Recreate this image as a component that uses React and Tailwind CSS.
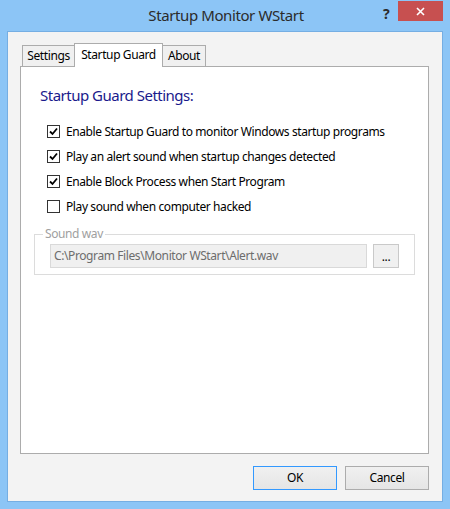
import { useState } from 'react';

const font = { fontFamily: '"Noto Sans", "Open Sans", "Liberation Sans", sans-serif' };

function CheckRow({ checked, label }) {
  const [on, setOn] = useState(checked);
  return (
    <label className="flex h-[25px] items-center cursor-default" onClick={() => setOn(!on)}>
      <span className="ml-[26px] flex h-[13px] w-[13px] items-center justify-center border border-[#333333] bg-white">
        {on ? (
          <svg width="9" height="9" viewBox="0 0 9 9">
            <path d="M1 4.5 L3.5 7 L8 1.5" fill="none" stroke="#000" strokeWidth="1.8" />
          </svg>
        ) : null}
      </span>
      <span className="ml-[6px] text-[12px] leading-none text-black">{label}</span>
    </label>
  );
}

export default function App() {
  const tabs = ['Settings', 'Startup Guard', 'About'];
  const [active, setActive] = useState(1);

  return (
    <div className="flex h-[509px] w-[450px] flex-col bg-[#8cc5f6] tracking-[-0.4px]" style={font}>
      {/* title bar */}
      <div className="relative flex h-[31px] items-center justify-center">
        <span className="text-[15px] text-[#2b2b2b] pl-[2px]">Startup Monitor WStart</span>
        <span className="absolute left-[383px] top-[3px] text-[14px] font-bold text-[#2b2b2b]">?</span>
        <button className="absolute left-[398px] top-[1px] flex h-[20px] w-[45px] items-center justify-center bg-[#c75050]">
          <svg width="9" height="9" viewBox="0 0 9 9">
            <path d="M1 1 L8 8 M8 1 L1 8" stroke="#fff" strokeWidth="1.6" />
          </svg>
        </button>
      </div>

      {/* client area */}
      <div className="mx-[7px] flex h-[471px] flex-col border border-[#75aee3] bg-[#f3f3f3] pl-[12px] pr-[13px] pt-[11px]">
        {/* tabs */}
        <div className="flex h-[23px] items-end text-[12px]">
          {tabs.map((t, i) =>
            i === active ? (
              <div
                key={t}
                className="relative z-10 -mb-px flex h-[24px] w-[89px] items-start justify-center border border-b-0 border-[#acacac] bg-white pt-[2px] text-black"
              >
                {t}
              </div>
            ) : (
              <div
                key={t}
                onClick={() => setActive(i)}
                className={`flex h-[21px] items-center justify-center border border-b-0 border-[#acacac] bg-[#f0f0f0] text-black ${i === 0 ? 'ml-[2px] w-[52px] border-r-0' : 'w-[43px] border-l-0'}`}
              >
                {t}
              </div>
            )
          )}
        </div>

        {/* tab panel */}
        <div className="h-[388px] w-[409px] border border-[#acacac] bg-white">
          <div className="pl-[19px] pt-[21px] text-[15px] leading-none tracking-[-0.5px] text-[#1a1a8c]">Startup Guard Settings:</div>
          <div className="mt-[16px] flex flex-col">
            <CheckRow checked label="Enable Startup Guard to monitor Windows startup programs" />
            <CheckRow checked label="Play an alert sound when startup changes detected" />
            <CheckRow checked label="Enable Block Process when Start Program" />
            <CheckRow checked={false} label="Play sound when computer hacked" />
          </div>

          <fieldset className="ml-[13px] mt-[9px] h-[47px] w-[376px] border border-[#dcdcdc] px-[15px] pt-[4px]">
            <legend className="ml-[-7px] px-[2px] text-[12px] leading-none text-[#a0a0a0]">Sound wav</legend>
            <div className="flex items-center gap-[6px]">
              <div className="flex h-[24px] w-[317px] items-center border border-[#d9d9d9] bg-[#f0f0f0] px-[3px] text-[12px] text-[#6d6d6d]">
                C:\Program Files\Monitor WStart\Alert.wav
              </div>
              <button className="flex h-[24px] w-[26px] items-end justify-center border border-[#c9c9c9] bg-[#f0f0f0] pb-[4px] text-[12px] leading-none text-black">
                ...
              </button>
            </div>
          </fieldset>
        </div>

        {/* buttons */}
        <div className="mt-[12px] flex justify-end gap-[8px] text-[12px]">
          <button className="h-[24px] w-[84px] border border-[#3399ff] bg-gradient-to-b from-[#f0f0f0] to-[#e5e5e5] text-black">
            OK
          </button>
          <button className="h-[24px] w-[84px] border border-[#acacac] bg-gradient-to-b from-[#f0f0f0] to-[#e5e5e5] text-black">
            Cancel
          </button>
        </div>
      </div>
    </div>
  );
}
